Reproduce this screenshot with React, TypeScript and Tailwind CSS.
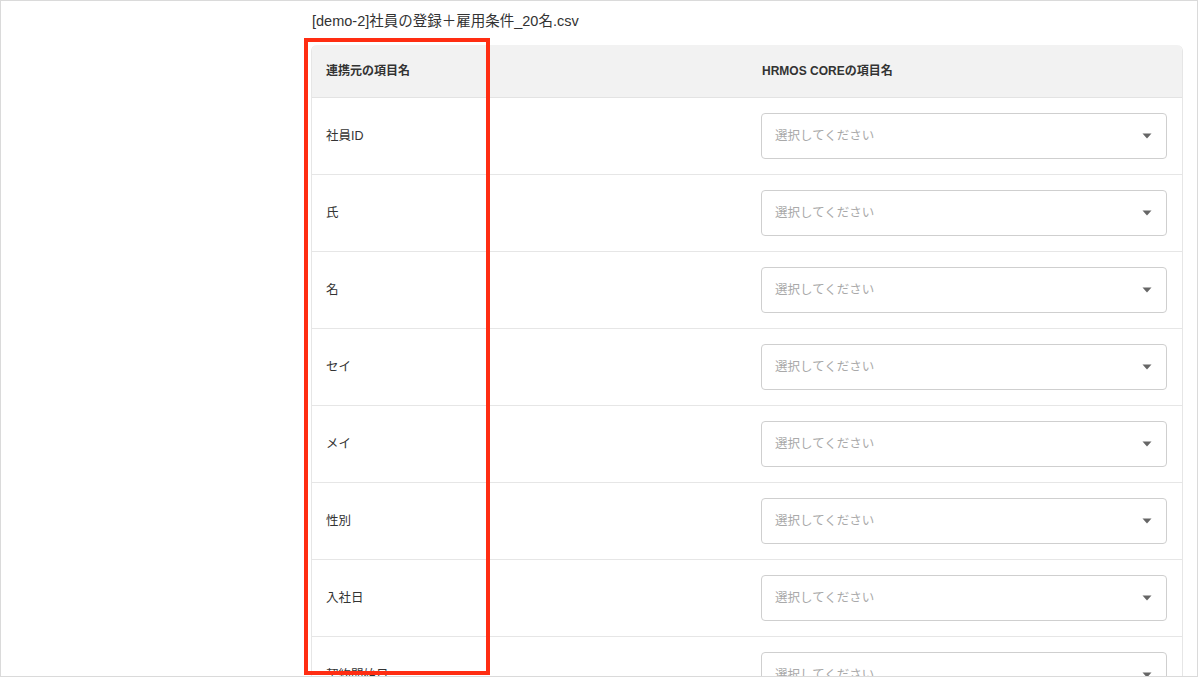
const rows = ["社員ID", "氏", "名", "セイ", "メイ", "性別", "入社日", "契約開始日"];

function Select() {
  return (
    <div className="flex h-[46px] w-full items-center justify-between rounded-[4px] border border-[#cfcfcf] bg-white pl-[13px] pr-[14px]">
      <span className="text-[12.5px] text-[#a9a9a9]">選択してください</span>
      <svg width="10" height="6" viewBox="0 0 10 6">
        <path d="M0.5 0.5 H9.5 L5 5.5 Z" fill="#666" />
      </svg>
    </div>
  );
}

export default function App() {
  return (
    <div
      className="relative h-[677px] w-[1198px] overflow-hidden border border-[#dadada] bg-white text-[#333]"
      style={{ fontFamily: '"Liberation Sans", "Noto Sans CJK JP", sans-serif' }}
    >
      <div className="flex flex-col pl-[310px] pt-[10px]">
        <h1 className="h-[20px] pl-[1px] text-[14.5px] leading-[20px] text-[#333]">
          [demo-2]社員の登録＋雇用条件_20名.csv
        </h1>
        <div className="mt-[14px] w-[872px] overflow-hidden rounded-t-[6px] border-x border-[#e6e6e6]">
          <div className="grid h-[53px] grid-cols-2 border-b border-[#e3e3e3] bg-[#f2f2f2]">
            <div className="flex items-center pl-[14px] pr-[15px] text-[12px] font-bold">連携元の項目名</div>
            <div className="flex items-center pl-[15px] pr-[15px] text-[12px] font-bold">HRMOS COREの項目名</div>
          </div>
          {rows.map((label) => (
            <div key={label} className="grid grid-cols-2 border-b border-[#e6e6e6] bg-white">
              <div className="flex items-center pl-[14px] pr-[15px] text-[12.5px]">{label}</div>
              <div className="py-[15px] pl-[14px] pr-[15px]">
                <Select />
              </div>
            </div>
          ))}
        </div>
      </div>
      <div className="absolute left-[303px] top-[37px] h-[637px] w-[186px] border-[4px] border-[#ff2d12]" />
    </div>
  );
}
